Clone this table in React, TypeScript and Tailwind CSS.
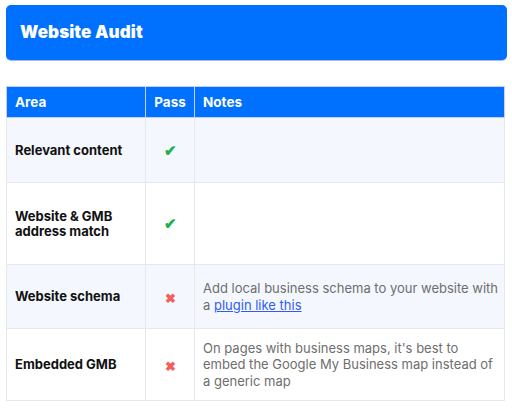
import React from "react";

const rows = [
  { area: "Relevant content", pass: true, notes: null, h: "h-[65px]", bg: "bg-[#f4f7fe]" },
  { area: "Website & GMB address match", pass: true, notes: null, h: "h-[82px]", bg: "bg-white" },
  { area: "Website schema", pass: false, notes: "schema", h: "h-[64px]", bg: "bg-[#f4f7fe]" },
  { area: "Embedded GMB", pass: false, notes: "gmb", h: "h-[72px]", bg: "bg-white" },
];

export default function App() {
  return (
    <div className="w-[512px] h-[409px] bg-white pt-[5px] px-[6px]" style={{ fontFamily: "Inter, 'Noto Sans', sans-serif" }}>
      <div className="h-[55px] w-[501px] rounded-[5px] bg-[#0070ff] shadow-[0_1px_0_#a9b4ff] flex items-center pl-[14px]">
        <span className="text-white text-[17px] font-black tracking-[0.1px]">Website Audit</span>
      </div>
      <table className="mt-[26px] w-[499px] border-collapse table-fixed">
        <colgroup>
          <col className="w-[139px]" />
          <col className="w-[49px]" />
          <col />
        </colgroup>
        <thead>
          <tr className="h-[31px] bg-[#0070ff] text-white text-[13.5px] font-bold text-left">
            <th className="border border-[#c7cdfc] pl-[8px] font-bold">Area</th>
            <th className="border border-[#c7cdfc] text-center font-bold">Pass</th>
            <th className="border border-[#c7cdfc] pl-[8px] font-bold">Notes</th>
          </tr>
        </thead>
        <tbody>
          {rows.map((r, i) => (
            <tr key={i} className={`${r.h} ${r.bg}`}>
              <td className="border border-[#e6e8ec] pl-[8px] pr-[6px] text-[13px] font-bold text-[#111] leading-[15px] align-middle">
                {r.area}
              </td>
              <td className="border border-[#e6e8ec] text-center align-middle">
                {r.pass ? (
                  <span className="text-[#22b14c] text-[15px] font-bold">✔</span>
                ) : (
                  <span className="text-[#f25f5c] text-[13px] font-bold">✖</span>
                )}
              </td>
              <td className="border border-[#e6e8ec] pl-[8px] pr-[4px] text-[13px] text-[#6e6e6e] leading-[16.5px] align-middle">
                {r.notes === "schema" && (
                  <>
                    Add local business schema to your website with a{" "}
                    <a className="text-[#2f5cf5] underline">plugin like this</a>
                  </>
                )}
                {r.notes === "gmb" && (
                  <>On pages with business maps, it's best to embed the Google My Business map instead of a generic map</>
                )}
              </td>
            </tr>
          ))}
        </tbody>
      </table>
    </div>
  );
}
